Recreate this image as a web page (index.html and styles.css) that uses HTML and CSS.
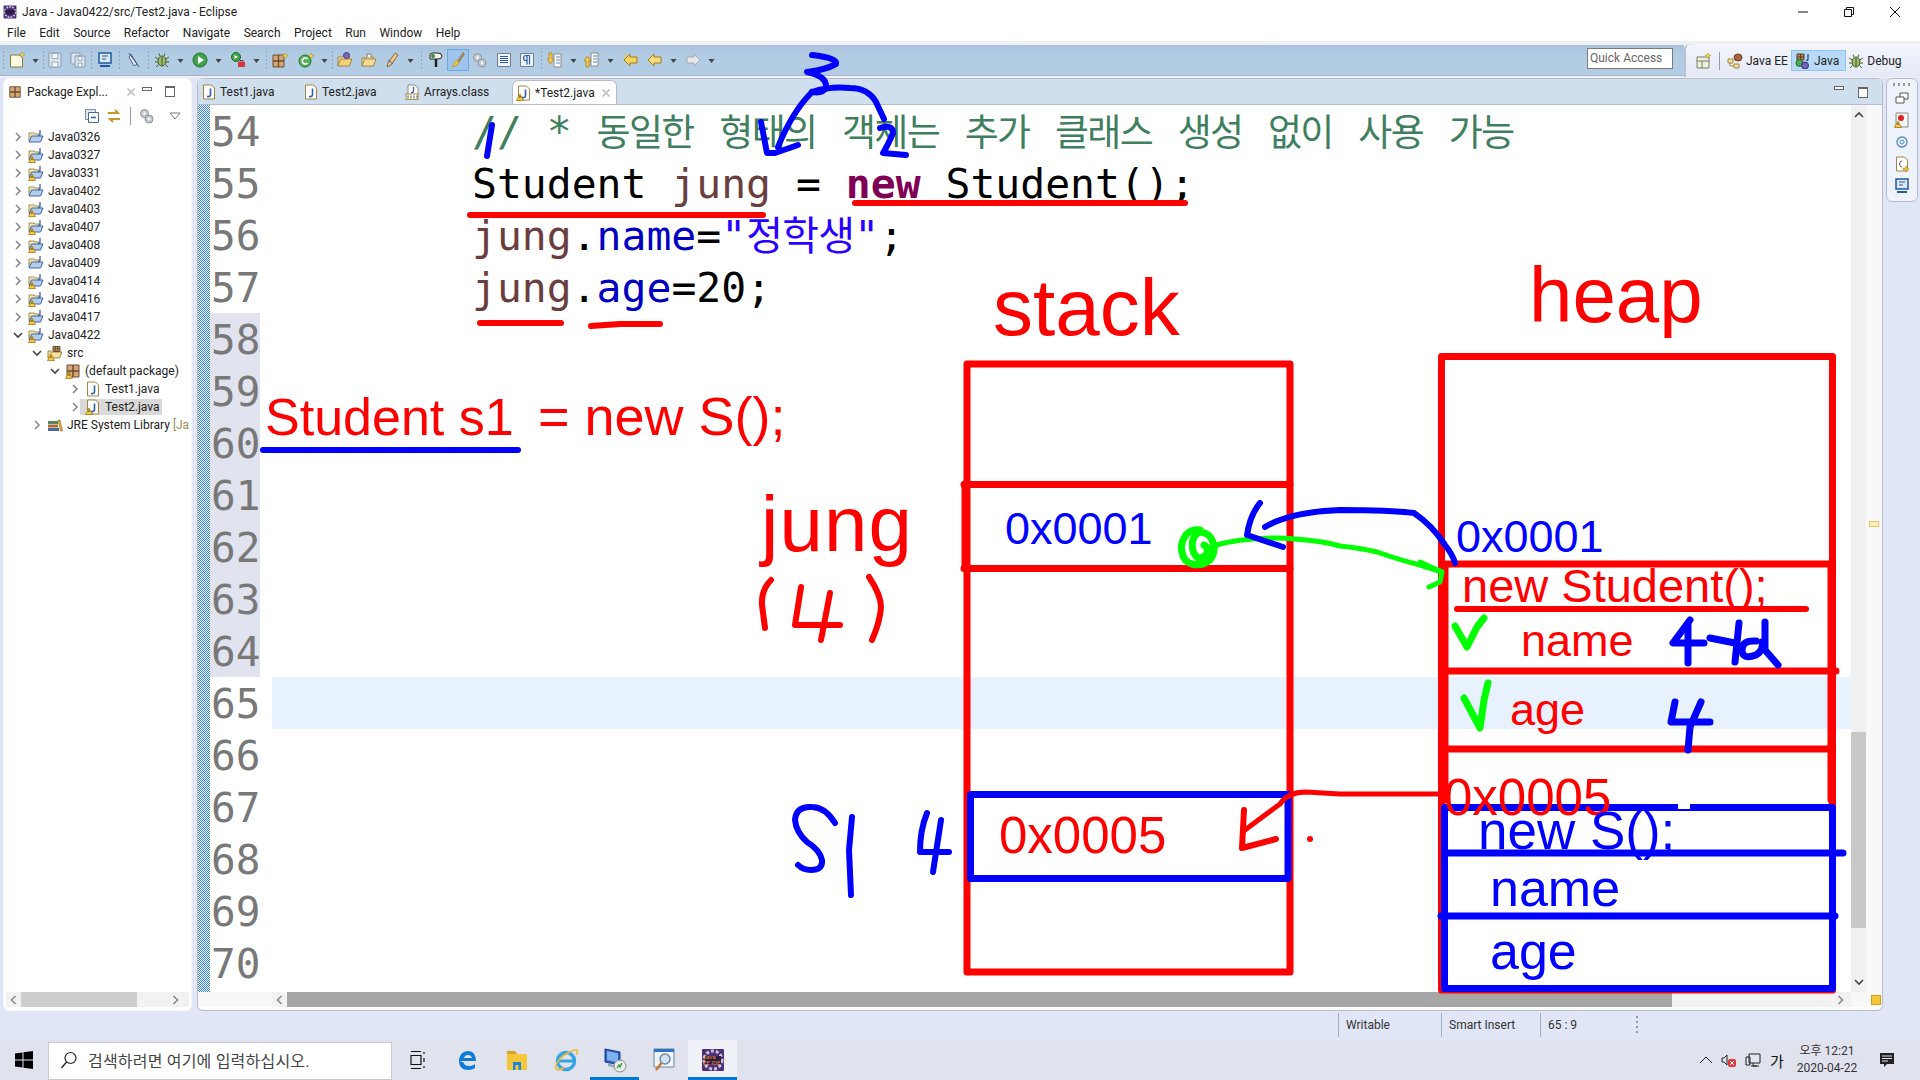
FILE: index.html
```html
<!DOCTYPE html>
<html lang="ko">
<head>
    <meta charset="UTF-8">
    <title>Java - Java0422/src/Test2.java - Eclipse</title>
    <link rel="stylesheet" href="styles.css">
</head>
<body>

    <!-- shared icons -->
    <svg class="defs" width="0" height="0">
        <symbol id="warn" viewBox="0 0 16 16"><path d="M0.5 15.5 4 9l3.5 6.5z" fill="#f6c945" stroke="#a97a12" stroke-width=".8"/><path d="M4 11v2" stroke="#5a3c00"/></symbol>
        <symbol id="proj" viewBox="0 0 16 16"><path d="M1 12V4h5l1 1h5v2" fill="#f6e7b0" stroke="#a08c50"/><path d="M1 13l2.500-6H15l-2.500 6z" fill="#b5cdeb" stroke="#3f66ad"/><path d="M12 1v4q0 1.500-2 1.500" fill="none" stroke="#3f66ad" stroke-width="1.300"/></symbol>
        <symbol id="src" viewBox="0 0 16 16"><path d="M1 13l2.500-6H15l-2.500 6z" fill="#f3dfa0" stroke="#a08642"/><path d="M1 13V6h3" fill="#f6e7b0" stroke="#a08642"/><path d="M6 1.500h7v5H6zM8.300 1.500v5M10.700 1.500v5M6 4h7" fill="#c9a272" stroke="#6e4a2c"/></symbol>
        <symbol id="pkg" viewBox="0 0 16 16"><path d="M2 2h12v12H2z" fill="#d3a878" stroke="#6e4a2c"/><path d="M8 2v12M2 8h12" stroke="#6e4a2c" stroke-width="1.500"/></symbol>
        <symbol id="jfile" viewBox="0 0 16 16"><path d="M2.500 1h8l3 3v11h-11z" fill="#fff" stroke="#a08642"/><path d="M9.500 4.500v6q0 2.500-3.500 2" fill="none" stroke="#2f5fa8" stroke-width="1.600"/></symbol>
        <symbol id="newfile" viewBox="0 0 16 16"><path d="M1.500 3h9l3 3v9h-12z" fill="#fdf8e0" stroke="#8a7a40"/><path d="M13 0l1 2 2 .5-2 1-1 2-1-2-2-1 2-.5z" fill="#f6d64a" stroke="#a98a18" stroke-width=".5"/></symbol>
        <symbol id="cfile" viewBox="0 0 16 16"><path d="M3 1h7l3 3v7H3z" fill="#fff" stroke="#8a8a8a"/><path d="M8.500 3v4q0 2-2.500 1.500" fill="none" stroke="#2f5fa8" stroke-width="1.300"/><rect x="1" y="10" width="12" height="5.500" fill="#fff" stroke="#b08a3e"/><path d="M3 11.500v3M6 11.500v3M9 11.500v3M12 11.500v3" stroke="#555"/></symbol>
        <symbol id="lib" viewBox="0 0 16 16"><path d="M1 4h10v3H1z" fill="#5a8a5a"/><path d="M1 7.500h10v3H1z" fill="#b06a3a"/><path d="M1 11h11v3H1z" fill="#4a6a9a"/><path d="M11 3l2 0 2.500 11h-2z" fill="#e0b040" stroke="#8a6a20" stroke-width=".6"/></symbol>
        <symbol id="cx" viewBox="0 0 10 10"><path d="M2 1.500 5 4.500 8 1.500 8.500 2 5.500 5 8.500 8 8 8.500 5 5.500 2 8.500 1.500 8 4.500 5 1.500 2z" fill="#fff" stroke="#8c8c8c" stroke-width=".7"/></symbol>
        <symbol id="chr" viewBox="0 0 8 10"><path d="M2 1l4 4-4 4" fill="none" stroke="#8a8a8a" stroke-width="1.600"/></symbol>
        <symbol id="chd" viewBox="0 0 10 8"><path d="M1 2l4 4 4-4" fill="none" stroke="#444" stroke-width="1.600"/></symbol>
        <symbol id="dd" viewBox="0 0 7 7"><path d="M.5 2h6L3.500 6z" fill="#444"/></symbol>
        <symbol id="save" viewBox="0 0 16 16"><path d="M2 1h12v14H2z" fill="#dbe4ef" stroke="#8c9cb0"/><path d="M5 1.500h6v5H5zM5 10h6v5H5z" fill="#f4f6f9" stroke="#9aa8ba"/></symbol>
        <symbol id="saveall" viewBox="0 0 16 16"><path d="M1 1h9v3H6v8H1z" fill="#dbe4ef" stroke="#8c9cb0"/><path d="M5 4h10v11H5z" fill="#dbe4ef" stroke="#8c9cb0"/><path d="M8 4.500h4v4H8zM8 11h4v4H8z" fill="#f4f6f9" stroke="#9aa8ba"/></symbol>
        <symbol id="monitor" viewBox="0 0 16 16"><path d="M2 1h12v10H2z" fill="#dde8f6" stroke="#1f5a9e" stroke-width="1.500"/><path d="M5 4h6M5 7h4" stroke="#1f5a9e"/><path d="M3 13h10v2H3z" fill="#1f5a9e"/></symbol>
        <symbol id="slash" viewBox="0 0 16 16"><path d="M5 2l6 10-3 2-5-9z" fill="#e8edf5" stroke="#55688a"/><path d="M3 1l10 14" stroke="#2a5aa0"/></symbol>
        <symbol id="bug" viewBox="0 0 16 16"><ellipse cx="8" cy="9" rx="4" ry="5" fill="#9bb96a" stroke="#46602a"/><path d="M8 5v9M4 7 1 5M12 7l3-2M4 10H1M12 10h3M4.500 12.500 2 15M11.500 12.500 14 15M6 4 5 1.500M10 4l1-2.500" stroke="#46602a" fill="none"/></symbol>
        <symbol id="run" viewBox="0 0 16 16"><circle cx="8" cy="8" r="7" fill="#3fa34a" stroke="#1e6a2a"/><path d="M6 4l6 4-6 4z" fill="#fff"/></symbol>
        <symbol id="ext" viewBox="0 0 16 16"><circle cx="6" cy="5" r="4.500" fill="#3fa34a" stroke="#1e6a2a"/><path d="M4.500 3l3.500 2-3.500 2z" fill="#fff"/><path d="M8 10h7v5H8z" fill="#d6343a"/><path d="M10 10V8.500h3V10" fill="none" stroke="#8a1c20"/></symbol>
        <symbol id="newpkg" viewBox="0 0 16 16"><path d="M1 3h11v12H1z" fill="#d3a878" stroke="#6e4a2c"/><path d="M6.500 3v12M1 9h11" stroke="#6e4a2c" stroke-width="1.300"/><path d="M13 1l1 2 2 .5-2 1-1 2-1-2-2-1 2-.5z" fill="#f6d64a" stroke="#a98a18" stroke-width=".5"/></symbol>
        <symbol id="newcls" viewBox="0 0 16 16"><circle cx="7" cy="9" r="6" fill="#57b25a" stroke="#22702a"/><path d="M9.500 7a3 3 0 1 0 0 4" fill="none" stroke="#fff" stroke-width="1.600"/><path d="M13 1l1 2 2 .5-2 1-1 2-1-2-2-1 2-.5z" fill="#f6d64a" stroke="#a98a18" stroke-width=".5"/></symbol>
        <symbol id="openf" viewBox="0 0 16 16"><path d="M1 14V5h5l1-1h5v3" fill="#f6e7b0" stroke="#a08642"/><path d="M1 14l2.500-7H15l-2.500 7z" fill="#f3d27a" stroke="#a08642"/><circle cx="9.500" cy="3.500" r="3" fill="#7a68b0" stroke="#453680"/></symbol>
        <symbol id="clip" viewBox="0 0 16 16"><path d="M1 14V6h4l1-1h6v2" fill="#f6e7b0" stroke="#a08642"/><path d="M1 14l2.500-7H15l-2.500 7z" fill="#f7dc94" stroke="#a08642"/><path d="M6 5V2h4v3" fill="#fff" stroke="#777"/></symbol>
        <symbol id="pencil" viewBox="0 0 16 16"><path d="M4 11l7-10 3 2-7 10-4 2z" fill="#f0c48a" stroke="#8a6a3a"/><path d="M4 8l5 4" stroke="#3a68a8"/></symbol>
        <symbol id="pin" viewBox="0 0 16 16"><path d="M2 3q0-2 3-2h5q4 0 4 3t-4 3H2z" fill="#f2f4ee" stroke="#222"/><circle cx="5" cy="4" r="2" fill="#3f8a4a"/><path d="M8 7v8" stroke="#222" stroke-width="2.500"/></symbol>
        <symbol id="brush" viewBox="0 0 16 16"><path d="M13 0 7 9l2 2 6-9z" fill="#9c8660"/><path d="M7 8c-2 1-3 3-5 7 4-1 6-2 7-4z" fill="#e8c83a" stroke="#a98a18" stroke-width=".5"/></symbol>
        <symbol id="gears" viewBox="0 0 16 16"><circle cx="5.500" cy="5.500" r="4" fill="#c5cad2" stroke="#8c929c"/><circle cx="10" cy="11" r="4" fill="#c5cad2" stroke="#8c929c"/><circle cx="5.500" cy="5.500" r="1.200" fill="#fff"/><circle cx="10" cy="11" r="1.200" fill="#fff"/></symbol>
        <symbol id="block" viewBox="0 0 16 16"><path d="M1.500 1.500h13v13h-13z" fill="#eef3fa" stroke="#6f7f98"/><path d="M4 4.500h8M4 6.500h8M4 8.500h8M4 10.500h8" stroke="#2c5da6"/></symbol>
        <symbol id="para" viewBox="0 0 16 16"><path d="M1.500 1.500h13v13h-13z" fill="#eef3fa" stroke="#6f7f98"/><path d="M10.500 3.500v9M8 3.500v9M10.500 3.500H7a2.500 2.500 0 0 0 0 5h1" fill="none" stroke="#2c5da6" stroke-width="1.200"/></symbol>
        <symbol id="nextan" viewBox="0 0 16 16"><path d="M7 2h7v13H7z" fill="#fff" stroke="#888"/><path d="M9 5h4M9 8h4M9 11h4" stroke="#5a7fb8"/><path d="M2 1h3v6h2L3.500 12 0 7h2z" fill="#f4c94a" stroke="#a27c14" stroke-width=".7"/></symbol>
        <symbol id="prevan" viewBox="0 0 16 16"><path d="M7 1h7v13H7z" fill="#fff" stroke="#888"/><path d="M9 4h4M9 7h4M9 10h4" stroke="#5a7fb8"/><path d="M2 15h3V9h2L3.500 4 0 9h2z" fill="#f4c94a" stroke="#a27c14" stroke-width=".7"/></symbol>
        <symbol id="lastedit" viewBox="0 0 16 16"><path d="M1 8l6-6v3h7v6H7v3z" fill="#f4d35e" stroke="#a27c14"/><path d="M1 1l1 2 2 .5-2 1-1 2" fill="#f4c94a"/></symbol>
        <symbol id="back" viewBox="0 0 16 16"><path d="M1 8l6-6v3h7v6H7v3z" fill="#f6dc80" stroke="#a27c14"/></symbol>
        <symbol id="fwd" viewBox="0 0 16 16"><path d="M15 8 9 2v3H2v6h7v3z" fill="#e6e8ec" stroke="#a5aab4"/></symbol>
        <symbol id="persp" viewBox="0 0 16 16"><path d="M1 4h12v11H1z" fill="#eef0e0" stroke="#7a7a60"/><path d="M1 8h12M6 8v7" stroke="#7a7a60"/><path d="M12 0l1 2 2 .5-2 1-1 2-1-2-2-1 2-.5z" fill="#f6d64a" stroke="#a98a18" stroke-width=".5"/></symbol>
        <symbol id="jee" viewBox="0 0 16 16"><path d="M1 6h5v4H1zM7 11h5v4H7z" fill="#f4e2a0" stroke="#a08642"/><path d="M3 10v3h4" fill="none" stroke="#a08642"/><ellipse cx="11" cy="4.500" rx="4" ry="3.500" fill="#a8653a" stroke="#6a3a1a"/></symbol>
        <symbol id="jpersp" viewBox="0 0 16 16"><path d="M2 1h7v6H2z" fill="#b08a60" stroke="#5a3c20"/><path d="M5.500 1v6M2 4h7" stroke="#5a3c20"/><circle cx="4.500" cy="10" r="3.500" fill="#4faa55" stroke="#226a2a"/><circle cx="10" cy="12.500" r="3.500" fill="#7464b8" stroke="#3a2c80"/><path d="M13 1v5q0 1.500-2 1.500" fill="none" stroke="#2c5da6" stroke-width="1.500"/></symbol>
        <symbol id="eclipseapp" viewBox="0 0 24 24"><rect x="1" y="1" width="22" height="22" rx="1" fill="#4b2f78"/><circle cx="12" cy="12" r="9" fill="none" stroke="#c9c4d6" stroke-width="3" stroke-dasharray="3 2"/><rect x="4" y="8" width="16" height="8" fill="#2c1c48"/></symbol>
    </svg>

    <header class="titlebar">
        <svg class="appicon" width="14" height="14"><use href="#eclipseapp"/></svg>
        <span>Java - Java0422/src/Test2.java - Eclipse</span>
        <div class="winbtns">
            <svg width="46" height="22" viewBox="0 0 46 22"><path d="M18 11h10" stroke="#111"/></svg>
            <svg width="46" height="22" viewBox="0 0 46 22"><path d="M18.500 8.500h7v7h-7zM20.500 8.500v-2h7v7h-2" fill="none" stroke="#111"/></svg>
            <svg width="46" height="22" viewBox="0 0 46 22"><path d="M18 6l10 10M28 6 18 16" stroke="#111"/></svg>
        </div>
    </header>

    <nav class="menubar">
        <span>File</span><span>Edit</span><span>Source</span><span>Refactor</span><span>Navigate</span><span>Search</span><span>Project</span><span>Run</span><span>Window</span><span>Help</span>
    </nav>

    <div class="coolbar">
        <div class="tools">
            <i class="sep s5"></i>
            <b class="tool"><svg><use href="#newfile"/></svg></b><b class="drop"><svg><use href="#dd"/></svg></b><i class="sep s2"></i>
            <b class="tool"><svg><use href="#save"/></svg></b><b class="tool g1"><svg><use href="#saveall"/></svg></b><i class="sep s5"></i>
            <b class="tool"><svg><use href="#monitor"/></svg></b><i class="sep s7"></i>
            <b class="tool"><svg><use href="#slash"/></svg></b><i class="sep s6"></i>
            <b class="tool"><svg><use href="#bug"/></svg></b><b class="drop"><svg><use href="#dd"/></svg></b>
            <b class="tool g2"><svg><use href="#run"/></svg></b><b class="drop"><svg><use href="#dd"/></svg></b>
            <b class="tool g2"><svg><use href="#ext"/></svg></b><b class="drop"><svg><use href="#dd"/></svg></b><i class="sep s6"></i>
            <b class="tool"><svg><use href="#newpkg"/></svg></b>
            <b class="tool g4"><svg><use href="#newcls"/></svg></b><b class="drop"><svg><use href="#dd"/></svg></b><i class="sep s3"></i>
            <b class="tool"><svg><use href="#openf"/></svg></b><b class="tool g2"><svg><use href="#clip"/></svg></b>
            <b class="tool g1"><svg><use href="#pencil"/></svg></b><b class="drop"><svg><use href="#dd"/></svg></b><i class="sep s8"></i>
            <b class="tool"><svg><use href="#pin"/></svg></b>
            <b class="tool on"><svg><use href="#brush"/></svg></b>
            <b class="tool"><svg><use href="#gears"/></svg></b>
            <b class="tool g2"><svg><use href="#block"/></svg></b>
            <b class="tool g1"><svg><use href="#para"/></svg></b><i class="sep s6"></i>
            <b class="tool"><svg><use href="#nextan"/></svg></b><b class="drop"><svg><use href="#dd"/></svg></b>
            <b class="tool g1"><svg><use href="#prevan"/></svg></b><b class="drop"><svg><use href="#dd"/></svg></b>
            <b class="tool g3"><svg><use href="#lastedit"/></svg></b>
            <b class="tool g2"><svg><use href="#back"/></svg></b><b class="drop"><svg><use href="#dd"/></svg></b>
            <b class="tool g2"><svg><use href="#fwd"/></svg></b><b class="drop"><svg><use href="#dd"/></svg></b>
        </div>
        <div class="quick">Quick Access</div>
        <div class="persp">
            <svg class="ic16"><use href="#persp"/></svg>
            <i class="vline"></i>
            <span class="pitem"><svg class="ic16"><use href="#jee"/></svg>Java EE</span>
            <span class="pitem on"><svg class="ic16"><use href="#jpersp"/></svg>Java</span>
            <span class="pitem"><svg class="ic16"><use href="#bug"/></svg>Debug</span>
        </div>
    </div>

    <main class="workbench">
        <section class="pane explorer">
            <div class="viewtab">
                <svg class="ic14"><use href="#pkg"/></svg>
                <span class="viewname">Package Expl...</span>
                <svg class="closex"><use href="#cx"/></svg>
                <i class="minbtn"></i><i class="maxbtn"></i>
            </div>
            <div class="viewtools">
                <svg class="ic16"><path d="M1.500 1.500h10v10h-10z" fill="#dfe8f2" stroke="#7c8ea6"/><path d="M4.500 4.500h10v10h-10z" fill="#fff" stroke="#4f6c90"/><path d="M7 9.500h5" stroke="#2c5da6" stroke-width="1.500"/></svg>
                <svg class="ic16"><path d="M2 5h10l-3-3M14 11H4l3 3" fill="none" stroke="#c59a2c" stroke-width="2"/></svg>
                <i class="vline"></i>
                <svg class="ic16"><use href="#gears"/></svg>
                <svg class="viewmenu" width="12" height="8"><path d="M1 1h10L6 7z" fill="#fff" stroke="#777"/></svg>
            </div>
            <div class="tree">
                <div class="row"><svg class="chev"><use href="#chr"/></svg><svg class="ic16"><use href="#proj"/></svg><span>Java0326</span></div>
                <div class="row"><svg class="chev"><use href="#chr"/></svg><svg class="ic16"><use href="#proj"/><use href="#warn"/></svg><span>Java0327</span></div>
                <div class="row"><svg class="chev"><use href="#chr"/></svg><svg class="ic16"><use href="#proj"/><use href="#warn"/></svg><span>Java0331</span></div>
                <div class="row"><svg class="chev"><use href="#chr"/></svg><svg class="ic16"><use href="#proj"/></svg><span>Java0402</span></div>
                <div class="row"><svg class="chev"><use href="#chr"/></svg><svg class="ic16"><use href="#proj"/><use href="#warn"/></svg><span>Java0403</span></div>
                <div class="row"><svg class="chev"><use href="#chr"/></svg><svg class="ic16"><use href="#proj"/><use href="#warn"/></svg><span>Java0407</span></div>
                <div class="row"><svg class="chev"><use href="#chr"/></svg><svg class="ic16"><use href="#proj"/><use href="#warn"/></svg><span>Java0408</span></div>
                <div class="row"><svg class="chev"><use href="#chr"/></svg><svg class="ic16"><use href="#proj"/></svg><span>Java0409</span></div>
                <div class="row"><svg class="chev"><use href="#chr"/></svg><svg class="ic16"><use href="#proj"/><use href="#warn"/></svg><span>Java0414</span></div>
                <div class="row"><svg class="chev"><use href="#chr"/></svg><svg class="ic16"><use href="#proj"/><use href="#warn"/></svg><span>Java0416</span></div>
                <div class="row"><svg class="chev"><use href="#chr"/></svg><svg class="ic16"><use href="#proj"/><use href="#warn"/></svg><span>Java0417</span></div>
                <div class="row"><svg class="chev"><use href="#chd"/></svg><svg class="ic16"><use href="#proj"/><use href="#warn"/></svg><span>Java0422</span></div>
                <div class="row d1"><svg class="chev"><use href="#chd"/></svg><svg class="ic16"><use href="#src"/><use href="#warn"/></svg><span>src</span></div>
                <div class="row d2"><svg class="chev"><use href="#chd"/></svg><svg class="ic16"><use href="#pkg"/><use href="#warn"/></svg><span>(default package)</span></div>
                <div class="row d3"><svg class="chev"><use href="#chr"/></svg><svg class="ic16"><use href="#jfile"/></svg><span>Test1.java</span></div>
                <div class="row d3"><svg class="chev"><use href="#chr"/></svg><span class="sel"><svg class="ic16"><use href="#jfile"/><use href="#warn"/></svg><span>Test2.java</span></span></div>
                <div class="row d1 clipped"><svg class="chev"><use href="#chr"/></svg><svg class="ic16"><use href="#lib"/></svg><span>JRE System Library <em>[Ja</em></span></div>
            </div>
            <div class="hscroll small">
                <svg class="arrow flip"><use href="#chr"/></svg>
                <i class="thumb light"></i>
                <svg class="arrow"><use href="#chr"/></svg>
            </div>
        </section>

        <section class="pane editor">
            <div class="tabbar">
                <span class="tab"><svg class="ic16"><use href="#jfile"/></svg>Test1.java</span>
                <span class="tab"><svg class="ic16"><use href="#jfile"/></svg>Test2.java</span>
                <span class="tab"><svg class="ic16"><use href="#cfile"/></svg>Arrays.class</span>
                <span class="tab active"><svg class="ic16"><use href="#jfile"/><use href="#warn"/></svg>*Test2.java<svg class="closex"><use href="#cx"/></svg></span>
                <i class="minbtn"></i><i class="maxbtn"></i>
            </div>
            <div class="editbody">
                <div class="ruler"></div>
                <div class="gutter">
                    <div>54</div><div>55</div><div>56</div><div>57</div>
                    <div class="diff">58</div><div class="diff">59</div><div class="diff">60</div><div class="diff">61</div><div class="diff">62</div><div class="diff">63</div><div class="diff">64</div>
                    <div>65</div><div>66</div><div>67</div><div>68</div><div>69</div><div>70</div>
                </div>
                <div class="code">
                    <div class="line"><span class="cm">// * <span class="ko">동일한 형태의 객체는 추가 클래스 생성 없이 사용 가능</span></span></div>
                    <div class="line">Student <span class="var">jung</span> = <span class="kw">new</span> Student();</div>
                    <div class="line"><span class="var">jung</span>.<span class="fld">name</span>=<span class="str">"<span class="ko">정학생</span>"</span>;</div>
                    <div class="line"><span class="var">jung</span>.<span class="fld">age</span>=20;</div>
                    <div class="line"></div><div class="line"></div><div class="line"></div><div class="line"></div>
                    <div class="line"></div><div class="line"></div><div class="line"></div>
                    <div class="line current"></div>
                    <div class="line"></div><div class="line"></div><div class="line"></div><div class="line"></div><div class="line"></div>
                </div>
                <div class="vscroll">
                    <svg class="arrow up"><use href="#chd"/></svg>
                    <i class="vthumb"></i>
                    <svg class="arrow"><use href="#chd"/></svg>
                </div>
                <div class="overview"><i class="mark"></i></div>
            </div>
            <div class="hscroll wide">
                <svg class="arrow flip"><use href="#chr"/></svg>
                <i class="thumb"></i>
                <svg class="arrow"><use href="#chr"/></svg>
                <i class="okbox"></i>
            </div>
        </section>

        <aside class="trim">
            <i class="grip"></i>
            <svg class="ic14"><path d="M5 1h8v6H9v4H1V5h4z" fill="#fff" stroke="#555"/><path d="M5 5h4v2" fill="none" stroke="#555"/></svg>
            <svg class="ic16"><path d="M2 1h12v14H2z" fill="#f6f6f6" stroke="#8a8a8a"/><circle cx="7" cy="6" r="3" fill="#e02020"/><use href="#warn"/></svg>
            <svg class="ic16"><circle cx="8" cy="8" r="5" fill="none" stroke="#4a8ac0" stroke-width="1.300"/><circle cx="8" cy="8" r="2" fill="none" stroke="#4a8ac0"/></svg>
            <svg class="ic16"><path d="M2.500 1h8l3 3v11h-11z" fill="#fff" stroke="#a08642"/><path d="M8 5q-2 0-2 1.500v1L5 8l1 .5v1Q6 11 8 11" fill="none" stroke="#555"/><path d="M9 12h3v-2l3 3-3 3v-2H9z" fill="#e8c050" stroke="#a27c14" stroke-width=".5"/></svg>
            <svg class="ic16"><use href="#monitor"/></svg>
        </aside>
    </main>

    <footer class="statusbar">
        <span class="cell w1">Writable</span>
        <span class="cell w2">Smart Insert</span>
        <span class="cell w3">65 : 9</span>
        <i class="dots"></i>
    </footer>

    <div class="taskbar">
        <div class="startbtn"><svg width="18" height="18" viewBox="0 0 18 18"><path d="M0 2.500 7.500 1.500v7H0zM8.500 1.300 18 0v8.500H8.500zM0 9.500h7.500v7L0 15.500zM8.500 9.500H18V18L8.500 16.700z" fill="#000"/></svg></div>
        <div class="search">
            <svg width="18" height="18" viewBox="0 0 18 18"><circle cx="10.500" cy="7" r="5.500" fill="none" stroke="#222" stroke-width="1.200"/><path d="M6.500 11 1.500 17" stroke="#222" stroke-width="1.300"/></svg>
            <span>검색하려면 여기에 입력하십시오.</span>
        </div>
        <div class="taskview"><svg width="16" height="18" viewBox="0 0 16 18"><path d="M1 .5h10M1 17.500h10M1 4.500h10v9H1zM14 1v2M14 7v4M14 15v2" fill="none" stroke="#111" stroke-width="1.200"/></svg></div>
        <div class="app"><svg width="24" height="24" viewBox="0 0 24 24"><path d="M4 13h16c0-6-3-10-8-10S3 7 3 13c0 6 4 9 9 9 3 0 5-1 7-2v-4c-2 1.500-4 2-6 2-3 0-5-1-5-3z M8 10c.5-2 2-3 4-3s3.500 1 4 3z" fill="#0d7cd6" fill-rule="evenodd"/></svg></div>
        <div class="app"><svg width="24" height="24" viewBox="0 0 24 24"><path d="M2 3h8l2 3h10v16H2z" fill="#f4c63c"/><path d="M2 3h8l2 3H2z" fill="#d9a520"/><path d="M8 14h8v8h-2.500v-5h-3v5H8z" fill="#1a86d8"/></svg></div>
        <div class="app"><svg width="26" height="26" viewBox="0 0 26 26"><circle cx="13" cy="14" r="8.500" fill="none" stroke="#35a4e6" stroke-width="3.500"/><path d="M6 14h14" stroke="#35a4e6" stroke-width="3"/><path d="M3 22C1 17 10 6 22 3c3-1 3 2 1 5M3 22c2 2 6 0 9-2" fill="none" stroke="#f0b830" stroke-width="1.600"/></svg></div>
        <div class="app open"><svg width="26" height="26" viewBox="0 0 26 26"><path d="M3 2l15 3v13L3 15z" fill="#2f63c8" stroke="#1a3d88"/><path d="M5 4l11 2.500v9L5 13z" fill="#7fb2ee"/><path d="M6 16l8 3v2l-8-2z" fill="#9aa4b4"/><circle cx="18" cy="19" r="6" fill="#e8ece8" stroke="#8a8f88"/><path d="M15 21l2-3 1 2 2-4" fill="none" stroke="#2f9a3a" stroke-width="1.300"/></svg></div>
        <div class="app"><svg width="26" height="26" viewBox="0 0 26 26"><path d="M3 2h20v18H3z" fill="#eef4fb" stroke="#6c86a6"/><path d="M3 2h20v3H3z" fill="#2f74c0"/><circle cx="14" cy="12" r="5" fill="#cfe4f7" stroke="#7a8a98" stroke-width="1.500"/><path d="M10.500 16 5 23" stroke="#c8762a" stroke-width="2.500"/></svg></div>
        <div class="app active"><svg width="24" height="24"><use href="#eclipseapp"/></svg><span class="appname">Java<br>EE IDE</span></div>
        <div class="tray">
            <svg class="traycell" width="14" height="8" viewBox="0 0 14 8"><path d="M1 7l6-6 6 6" fill="none" stroke="#222"/></svg>
            <svg class="traycell" width="16" height="16" viewBox="0 0 16 16"><path d="M1 6h2l3-3v10l-3-3H1z" fill="none" stroke="#222"/><rect x="7" y="7" width="8" height="8" rx="2" fill="#e0383c"/><path d="M9 9l4 4M13 9l-4 4" stroke="#fff"/></svg>
            <svg class="traycell" width="16" height="16" viewBox="0 0 16 16"><path d="M4 2h11v9H4zM1 5h4v8H1zM8 11v3h4M6 14h8" fill="#e4e6f0" stroke="#222"/></svg>
            <span class="traycell ime">가</span>
            <div class="clock"><span>오후 12:21</span><span>2020-04-22</span></div>
            <div class="notif"><svg width="16" height="16" viewBox="0 0 16 16"><path d="M1 1h14v11H8l-3 3v-3H1z" fill="#222"/><path d="M3 4h10M3 6.500h10M3 9h6" stroke="#e0e2ee"/></svg></div>
        </div>
    </div>

    <!-- 펜 필기 -->
    <svg class="ink" width="1920" height="1080" viewBox="0 0 1920 1080">
        <!-- boxes -->
        <g class="pen red w7">
            <path d="M967 364H1290V972H967Z"/>
            <path d="M964 484.500H1290M964 568.500H1290"/>
            <path d="M965 484V568"/>
            <path d="M1441.500 356.500H1832.500V990H1441.500Z"/>
            <path d="M1443 564H1832M1445 671H1836M1443 749H1832"/>
            <path d="M1445 566V800M1831 566V800"/>
        </g>
        <g class="pen blue w7">
            <path d="M970.500 794.500H1288V878.500H970.500Z"/>
            <path d="M1444.500 807.500H1832.500V988.500H1444.500Z"/>
            <path d="M1445 853H1843"/>
            <path d="M1441 916H1835"/>
        </g>
        <rect class="gap" x="1678" y="804" width="12" height="5"/>

        <!-- underlines -->
        <g class="pen red w6">
            <path d="M470 215H763"/>
            <path d="M855 203H1185"/>
            <path d="M480 323H561"/>
            <path d="M591 326 620 324H660"/>
            <path d="M1457 609H1806"/>
        </g>
        <path class="pen blue w6" d="M263 450H518"/>

        <!-- 1 2 3 arrows -->
        <g class="pen blue w6">
            <path d="M492 125 487 156"/>
            <path d="M812 92Q792 112 778 147"/>
            <path d="M761 122 767 153 775 153 798 145"/>
            <path d="M812 92Q830 86 850 88 868 88 876 102L884 119"/>
            <path d="M812 55Q838 58 836 64 825 70 807 72 826 76 826 86 825 94 812 92"/>
            <path d="M880 128Q893 124 893 133 888 145 883 153L906 155"/>
        </g>

        <!-- jung -->
        <text class="t red-t big" x="761" y="551" textLength="151">jung</text>
        <g class="pen red w6">
            <path d="M771 580Q761 590 762 605L765 628"/>
            <path d="M801 587 795 625H840"/>
            <path d="M830 593 821 640"/>
            <path d="M869 577Q881 595 881 607 880 622 872 640"/>
        </g>

        <!-- s1 4 -->
        <g class="pen blue w6">
            <path d="M835 823Q825 807 812 807 796 806 795 820 796 832 807 842 820 850 822 860 823 870 811 870 803 870 798 865"/>
            <path d="M852 817 849 850 851 895"/>
            <path d="M927 813Q920 830 920 852H949"/>
            <path d="M941 820 933 872"/>
        </g>

        <!-- stack / heap text -->
        <text class="t red-t s80" x="993" y="335">stack</text>
        <text class="t red-t big" x="1529" y="322">heap</text>
        <text class="t red-t s52" x="265" y="435">Student s1</text>
        <text class="t red-t s54" x="538" y="435">= new S();</text>
        <text class="t blue-t s45" x="1005" y="544">0x0001</text>
        <text class="t red-t s51" x="999" y="853">0x0005</text>
        <text class="t blue-t s45" x="1456" y="552">0x0001</text>
        <text class="t red-t s47" x="1462" y="602">new Student();</text>
        <text class="t red-t s45" x="1521" y="656">name</text>
        <text class="t red-t s45" x="1510" y="725">age</text>
        <text class="t red-t s51" x="1444" y="815">0x0005</text>
        <text class="t blue-t s53" x="1478" y="849">new S();</text>
        <text class="t blue-t s52" x="1490" y="906">name</text>
        <text class="t blue-t s52" x="1490" y="969">age</text>

        <!-- green -->
        <g class="pen green w7">
            <path d="M1200 530C1184 528 1180 545 1182 552 1184 566 1200 568 1210 560 1218 550 1214 533 1200 532 1190 536 1190 552 1198 558 1208 558 1210 548 1204 545"/>
            <path d="M1455 626 1467 647 1477 627 1484 618"/>
            <path d="M1464 698 1480 728 1484 700 1488 683"/>
        </g>
        <g class="pen green w5">
            <path d="M1212 546Q1240 538 1278 538 1320 540 1340 546 1360 548 1377 552 1400 560 1420 565L1442 572"/>
            <path d="M1420 562 1442 572 1440 582 1429 587"/>
        </g>

        <!-- heap → stack pointers -->
        <path class="pen blue w6" d="M1265 527Q1290 512 1340 510 1390 510 1414 513 1432 525 1445 545 1453 555 1455 563"/>
        <path class="pen blue w6" d="M1260 503Q1250 515 1247 535L1283 547"/>
        <path class="pen red w5" d="M1438 794H1340L1306 792Q1288 792 1280 804 1265 815 1245 830"/>
        <path class="pen red w6" d="M1244 810 1242 848 1276 839"/>
        <circle class="dot" cx="1310" cy="839" r="3"/>

        <!-- 4 -ld , 4 -->
        <g class="pen blue w7">
            <path d="M1690 620 1673 643H1704"/>
            <path d="M1688 625V663"/>
            <path d="M1710 638 1735 643"/>
            <path d="M1739 623 1735 662"/>
            <path d="M1756 641Q1742 640 1742 650 1742 660 1756 655 1764 650 1762 642"/>
            <path d="M1765 622V650L1778 665"/>
            <path d="M1675 702 1671 722H1710"/>
            <path d="M1701 702 1690 727 1688 750"/>
        </g>
    </svg>

</body>
</html>
```

FILE: styles.css
```css
html, body {
    margin: 0;
    padding: 0;
}
body {
    position: relative;
    width: 1920px;
    height: 1080px;
    overflow: hidden;
    display: flex;
    flex-direction: column;
    background-color: #e0e6f5;
    color: #222;
    font-family: Roboto, "Noto Sans CJK KR", sans-serif;
    font-size: 12px;
}
svg {
    display: block;
    flex: none;
}
i, b {
    display: block;
    font-style: normal;
    font-weight: normal;
    flex: none;
}
.defs {
    position: absolute;
}
.ic14 {
    width: 14px;
    height: 14px;
}
.ic16 {
    width: 16px;
    height: 16px;
}

/* title and menu */
.titlebar {
    height: 22px;
    flex: none;
    display: flex;
    align-items: center;
    box-sizing: border-box;
    background-color: #fff;
    padding: 1px 0 0 3px;
}
.appicon {
    margin-right: 5px;
}
.winbtns {
    margin-left: auto;
    padding-right: 2px;
    display: flex;
}
.menubar {
    height: 19px;
    flex: none;
    display: flex;
    align-items: center;
    gap: 13.5px;
    box-sizing: border-box;
    padding: 2px 0 0 7px;
    background-color: #fff;
}

/* toolbar */
.coolbar {
    height: 37px;
    flex: none;
    display: flex;
    align-items: center;
    padding-top: 2px;
    box-sizing: border-box;
    background-color: #eef0f5;
}
.tools {
    width: 1684px;
    height: 31px;
    display: flex;
    align-items: center;
    position: relative;
    padding-left: 1px;
    box-sizing: border-box;
    background: linear-gradient(#a9c3de, #b2cce4 35%);
    border-bottom: 1px solid #a9b0c8;
}
.tool {
    width: 22px;
    height: 22px;
    display: flex;
    align-items: center;
    justify-content: center;
}
.tool svg {
    width: 16px;
    height: 16px;
}
.tool.on {
    background-color: #9cc4ec;
    border: 1px solid #6ea8e0;
    box-sizing: border-box;
}
.g1 {
    margin-left: 1px;
}
.g2 {
    margin-left: 2px;
}
.g3 {
    margin-left: 3px;
}
.g4 {
    margin-left: 4px;
}
.drop {
    width: 14px;
}
.drop svg {
    width: 7px;
    height: 7px;
    margin: auto;
}
.sep {
    height: 18px;
    background: repeating-linear-gradient(#8fa6be 0 2px, transparent 2px 4px) center / 1px 100% no-repeat;
}
.s2 {
    width: 2px;
}
.s3 {
    width: 3px;
}
.s5 {
    width: 5px;
}
.s6 {
    width: 6px;
}
.s7 {
    width: 7px;
}
.s8 {
    width: 8px;
}
.quick {
    position: absolute;
    left: 1587px;
    top: 48px;
    width: 86px;
    height: 21px;
    box-sizing: border-box;
    border: 1px solid #7a7a7a;
    background-color: #fff;
    color: #666;
    line-height: 19px;
    padding-left: 2px;
}
.persp {
    flex: 1;
    height: 33px;
    display: flex;
    align-items: center;
    padding-left: 10px;
    background: linear-gradient(#f3f5fb, #e4e9f6);
    border-left: 2px solid #b8c0d2;
    border-radius: 6px 0 0 0;
    box-sizing: border-box;
}
.vline {
    width: 1px;
    height: 18px;
    background-color: #9a9aa0;
    margin: 0 7px;
}
.pitem {
    display: flex;
    align-items: center;
    height: 21px;
    gap: 3px;
    white-space: nowrap;
    box-sizing: border-box;
    margin-right: 3px;
}
.pitem.on {
    background-color: #b8daf8;
    border: 1px solid #8cc4f4;
    padding: 0 6px 0 3px;
    margin-right: 2px;
}

/* panes */
.workbench {
    flex: 1;
    min-height: 0;
    display: flex;
    padding: 0 1px 0 3px;
    gap: 5px;
}
.pane {
    height: 933px;
    display: flex;
    flex-direction: column;
    background-color: #fff;
    border-radius: 6px;
    box-sizing: border-box;
    position: relative;
}
.explorer {
    width: 189px;
    border: 1px solid #f4f6fb;
}
.viewtab {
    height: 25px;
    flex: none;
    display: flex;
    align-items: center;
    padding-left: 4px;
    gap: 5px;
}
.viewname {
    width: 79px;
    white-space: nowrap;
}
.closex {
    width: 10px;
    height: 10px;
    margin-left: 15px;
}
.minbtn {
    width: 10px;
    height: 4px;
    border: 1px solid #666;
    background-color: #fff;
    margin: 0 0 5px 1px;
    box-sizing: border-box;
}
.maxbtn {
    width: 10px;
    height: 11px;
    border: 1px solid #666;
    border-top-width: 2px;
    background-color: #fff;
    margin-left: 8px;
    box-sizing: border-box;
}
.viewtools {
    height: 24px;
    flex: none;
    display: flex;
    align-items: center;
    padding-left: 80px;
    gap: 6px;
}
.viewtools .vline {
    margin: 0 2px;
}
.viewmenu {
    margin-left: 8px;
}
.tree {
    flex: 1;
    min-height: 0;
    overflow: hidden;
}
.row {
    height: 18px;
    display: flex;
    align-items: center;
    padding-left: 9px;
    white-space: nowrap;
}
.row.d1 {
    padding-left: 28px;
}
.row.d2 {
    padding-left: 46px;
}
.row.d3 {
    padding-left: 66px;
}
.row span {
    margin-left: 4px;
}
.row em {
    font-style: normal;
    color: #a08c50;
}
.row .ic16 {
    margin-left: 5px;
}
.row .sel {
    display: flex;
    align-items: center;
    background-color: #d9d9d9;
    margin-left: 0;
    padding-right: 2px;
}
.chev {
    width: 10px;
    height: 10px;
}

/* scrollbars */
.hscroll {
    height: 15px;
    flex: none;
    display: flex;
    align-items: center;
    margin: 0 0 3px 0;
    position: relative;
}
.hscroll.wide {
    padding-left: 74px;
    background: linear-gradient(90deg, #f8f8f8 74px, #f2f2f2 74px, #f2f2f2 1653px, #f8f8f8 1653px);
}
.hscroll.small {
    margin: 0 2px 3px;
    background-color: #f2f2f2;
}
.arrow {
    width: 9px;
    height: 10px;
    margin: 0 3px;
}
.arrow.flip {
    transform: scaleX(-1);
}
.thumb {
    height: 15px;
    width: 1385px;
    background-color: #a6a6a6;
    margin-right: 161px;
}
.thumb.light {
    width: 116px;
    background-color: #cdcdcd;
    margin-right: 31px;
}
.okbox {
    width: 8px;
    height: 8px;
    background-color: #f4c838;
    border: 1px solid #d0a020;
    margin-left: 23px;
}

/* editor */
.editor {
    width: 1686px;
    border: 1px solid #b6bccc;
}
.tabbar {
    height: 26px;
    flex: none;
    display: flex;
    align-items: flex-end;
    box-sizing: border-box;
    background-color: #d0dfee;
    border-bottom: 1px solid #b6bccc;
    border-radius: 6px 6px 0 0;
}
.tab {
    height: 24px;
    display: flex;
    align-items: center;
    gap: 3px;
    width: 102px;
    padding-left: 3px;
    box-sizing: border-box;
}
.tab.active {
    background-color: #fff;
    border: 1px solid #b6bccc;
    border-bottom: none;
    border-radius: 6px 6px 0 0;
    width: 105px;
    margin-left: 8px;
    padding-left: 3px;
}
.tab.active .closex {
    margin-left: 3px;
}
.tabbar .minbtn {
    margin: 0 0 14px auto;
}
.tabbar .maxbtn {
    margin: 0 14px 6px 14px;
}
.editbody {
    flex: 1;
    min-height: 0;
    display: flex;
    background-color: #fff;
}
.ruler {
    width: 12px;
    background: repeating-conic-gradient(#2e8ad8 0 25%, #ffffff 0 50%) 0 0 / 2px 2px;
}
.gutter {
    width: 50px;
    flex: none;
    font-family: "DejaVu Sans Mono", monospace;
    font-size: 41px;
    color: #787878;
}
.gutter div {
    height: 52px;
    line-height: 54px;
    padding-left: 1px;
}
.gutter .diff {
    background-color: #e1e3ee;
}
.code {
    flex: 1;
    min-width: 0;
    margin-left: 12px;
    font-family: "DejaVu Sans Mono", monospace;
    font-size: 41.4px;
    color: #000;
}
.line {
    height: 52px;
    line-height: 54px;
    padding-left: 200px;
    white-space: pre;
}
.line.current {
    background-color: #e8f2fe;
}
.cm {
    color: #3f7f5f;
}
.var {
    color: #6a3e3e;
}
.kw {
    color: #7f0055;
    font-weight: bold;
}
.fld {
    color: #0000c0;
}
.str {
    color: #2a00ff;
}
.ko {
    font-family: "Noto Sans CJK KR", sans-serif;
    font-size: 37px;
    line-height: 1;
    letter-spacing: -1.7px;
    word-spacing: 17px;
}
.str .ko {
    font-size: 40px;
    letter-spacing: -0.8px;
}
.vscroll {
    width: 15px;
    flex: none;
    display: flex;
    flex-direction: column;
    align-items: center;
    background-color: #f0f0f0;
}
.vscroll .arrow {
    width: 10px;
    height: 8px;
    margin: 6px 0 0;
}
.vscroll .arrow.up {
    transform: scaleY(-1);
}
.vthumb {
    width: 15px;
    height: 196px;
    margin: 613px 0 44px;
    background-color: #c8c8c8;
}
.overview {
    width: 16px;
    flex: none;
    background-color: #f8f8f8;
    position: relative;
}
.mark {
    position: absolute;
    left: 3px;
    top: 416px;
    width: 8px;
    height: 4px;
    background-color: #fbeeb8;
    border: 1px solid #e8c860;
}

/* right trim */
.trim {
    width: 32px;
    height: 124px;
    display: flex;
    flex-direction: column;
    align-items: center;
    gap: 6px;
    box-sizing: border-box;
    margin-left: -2px;
    padding-top: 4px;
    background-color: #eef2fa;
    border: 1px solid #b6bccc;
    border-radius: 6px;
}
.grip {
    width: 18px;
    height: 3px;
    background: repeating-linear-gradient(90deg, #999 0 2px, transparent 2px 5px);
}

/* status bar */
.statusbar {
    height: 29px;
    flex: none;
    display: flex;
    align-items: center;
    box-sizing: border-box;
    padding: 0 0 2px 1338px;
    color: #333;
}
.cell {
    height: 24px;
    line-height: 24px;
    padding-left: 7px;
    box-sizing: border-box;
    border-left: 1px solid #a8acb8;
}
.w1 {
    width: 103px;
}
.w2 {
    width: 99px;
}
.w3 {
    width: 96px;
}
.dots {
    width: 2px;
    height: 18px;
    background: repeating-linear-gradient(#999 0 2px, transparent 2px 5px);
}

/* taskbar */
.taskbar {
    height: 40px;
    flex: none;
    display: flex;
    align-items: center;
    background-color: #e0e2ee;
}
.startbtn {
    width: 48px;
    display: flex;
    justify-content: center;
}
.search {
    width: 344px;
    height: 38px;
    margin-top: 2px;
    display: flex;
    align-items: center;
    gap: 10px;
    padding: 0 0 3px 11px;
    box-sizing: border-box;
    background-color: #fff;
    border: 1px solid #c8cbd6;
    font-size: 16px;
    letter-spacing: .2px;
    color: #444;
}
.taskview {
    width: 51px;
    display: flex;
    justify-content: center;
}
.app {
    width: 49px;
    height: 40px;
    box-sizing: border-box;
    display: flex;
    align-items: center;
    justify-content: center;
    position: relative;
}
.app.open {
    border-bottom: 3px solid #0078d7;
    padding-top: 3px;
}
.app.active {
    background-color: #f0f1f7;
    border-bottom: 3px solid #0078d7;
    padding-top: 3px;
}
.appname {
    position: absolute;
    left: 15px;
    top: 14px;
    font-size: 6px;
    line-height: 6px;
    color: #f08a20;
}
.tray {
    margin-left: auto;
    display: flex;
    align-items: center;
    padding-right: 10px;
}
.traycell {
    margin-left: 8px;
}
.ime {
    font-size: 15px;
    width: 16px;
    margin-left: 9px;
    color: #111;
}
.clock {
    width: 74px;
    margin-left: 4px;
    display: flex;
    flex-direction: column;
    align-items: center;
    line-height: 17px;
    color: #333;
}
.notif {
    width: 46px;
    display: flex;
    justify-content: center;
}

/* pen annotations, drawn over the whole window */
.ink {
    position: absolute;
    left: 0;
    top: 0;
    pointer-events: none;
}
.pen {
    fill: none;
    stroke-linecap: round;
    stroke-linejoin: round;
}
.red {
    stroke: #ff0000;
}
.blue {
    stroke: #0000ff;
}
.green {
    stroke: #00ff00;
}
.w5 {
    stroke-width: 5;
}
.w6 {
    stroke-width: 6;
}
.w7 {
    stroke-width: 7;
}
.gap {
    fill: #fff;
}
.dot {
    fill: #ff0000;
}
.t {
    font-family: "Liberation Sans", Arial, sans-serif;
}
.red-t {
    fill: #ff0000;
}
.blue-t {
    fill: #0000ff;
}
.s80 {
    font-size: 80px;
}
.big {
    font-size: 78px;
}
.s54 {
    font-size: 54px;
}
.s53 {
    font-size: 53px;
}
.s52 {
    font-size: 52px;
}
.s51 {
    font-size: 51px;
}
.s47 {
    font-size: 47px;
}
.s45 {
    font-size: 45px;
}
```
